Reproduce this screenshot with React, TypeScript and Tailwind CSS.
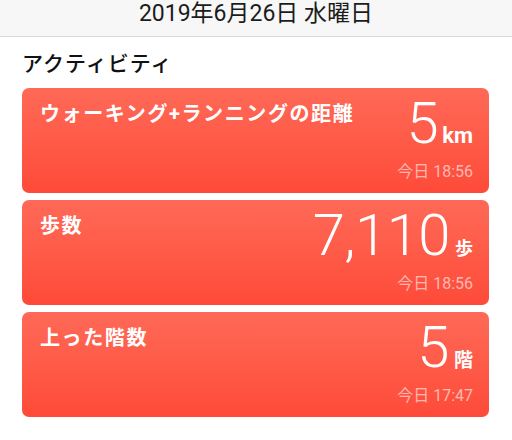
import React from "react";

const FONT = { fontFamily: 'Roboto, "Noto Sans CJK JP", sans-serif' };

type CardProps = {
  title: string;
  value: string;
  unit: string;
  unitClass: string;
  time: string;
};

function Card({ title, value, unit, unitClass, time }: CardProps) {
  return (
    <div className="h-[105px] rounded-[7px] bg-gradient-to-b from-[#ff6957] to-[#fe4a38] flex justify-between pl-[18px] pr-[16px] text-white">
      <div className="pt-[16px] text-[20px] font-bold leading-none tracking-[1.6px] whitespace-nowrap">{title}</div>
      <div className="self-end flex flex-col items-end pb-[13px]">
        <div className="flex items-baseline">
          <span className="text-[58px] font-light leading-none tracking-[-0.5px]">{value}</span>
          <span className={unitClass}>{unit}</span>
        </div>
        <div className="mt-[12px] text-[16px] leading-none text-white/60 whitespace-nowrap">{time}</div>
      </div>
    </div>
  );
}

export default function App() {
  return (
    <div className="w-[512px] h-[440px] bg-white overflow-hidden" style={FONT}>
      <div className="h-[37px] bg-[#f7f7f7] border-b border-[#dadada] flex justify-center">
        <div className="pt-[2px] text-[23px] leading-none text-[#1c1c1c] whitespace-nowrap">2019年6月26日 水曜日</div>
      </div>
      <div className="pl-[22px] pr-[23px]">
        <div className="mt-[17px] text-[21px] font-medium leading-none tracking-[1px] text-[#111]">アクティビティ</div>
        <div className="mt-[13px] flex flex-col gap-[7px]">
          <Card
            title="ウォーキング+ランニングの距離"
            value="5"
            unit="km"
            unitClass="ml-[4px] text-[22px] font-bold leading-none"
            time="今日 18:56"
          />
          <Card
            title="歩数"
            value="7,110"
            unit="歩"
            unitClass="ml-[5px] text-[18px] font-bold leading-none"
            time="今日 18:56"
          />
          <Card
            title="上った階数"
            value="5"
            unit="階"
            unitClass="ml-[5px] text-[19px] font-bold leading-none"
            time="今日 17:47"
          />
        </div>
      </div>
    </div>
  );
}
